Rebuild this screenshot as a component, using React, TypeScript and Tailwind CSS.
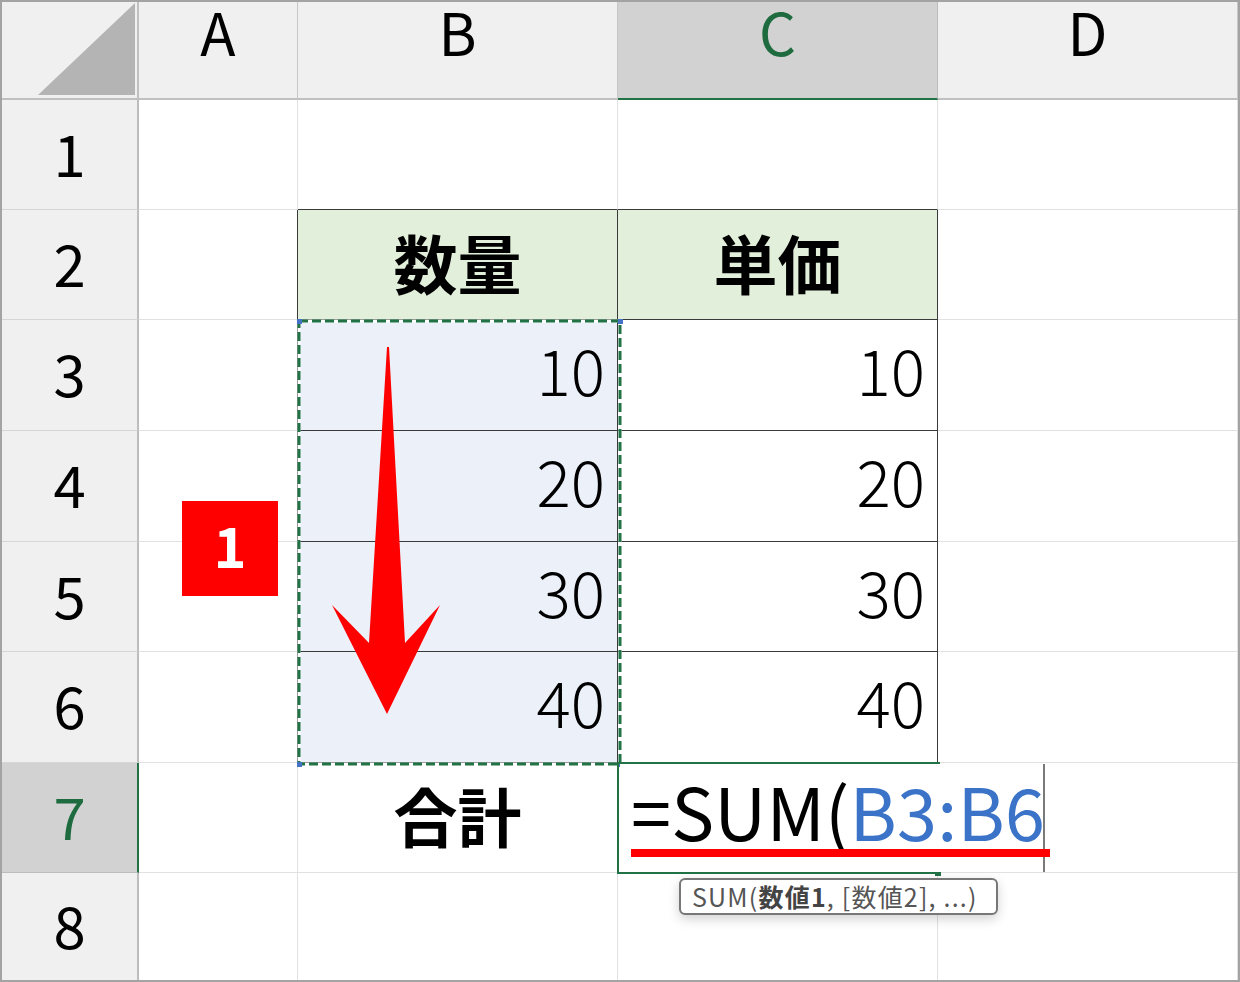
import React from "react";

const FONT = { fontFamily: '"Noto Sans CJK JP", "Noto Sans", sans-serif' };

const colHeaders = ["A", "B", "C", "D"];
const rowHeights = ["h-[110px]", "h-[110px]", "h-[111px]", "h-[111px]", "h-[110px]", "h-[111px]", "h-[110px]", "h-[108px]"];

type CellProps = { row: number; col: string };

function BodyCell({ row, col }: CellProps) {
  const inTable = (col === "B" || col === "C") && row >= 2 && row <= 6;
  const darkRight = inTable || (col === "A" && row >= 2 && row <= 6);
  const darkBottom = inTable || ((col === "B" || col === "C") && row === 1);

  let bg = "bg-white";
  if (inTable && row === 2) bg = "bg-[#e2efda]";
  if (col === "B" && row >= 3 && row <= 6) bg = "bg-[#ebf0f9]";

  const border = `${darkRight ? "border-r-[#3a3a3a]" : "border-r-[#e1e1e1]"} ${darkBottom ? "border-b-[#3a3a3a]" : "border-b-[#e1e1e1]"}`;

  let content: React.ReactNode = null;
  let align = "justify-center pb-[8px]";
  if (row === 2 && col === "B") content = <span className="text-[64px] font-bold">数量</span>;
  if (row === 2 && col === "C") content = <span className="text-[64px] font-bold">単価</span>;
  if (row === 7 && col === "B") content = <span className="text-[64px] font-bold">合計</span>;
  if ((col === "B" || col === "C") && row >= 3 && row <= 6) {
    content = <span className="text-[64px] font-light">{(row - 2) * 10}</span>;
    align = "justify-end pr-[12px] pb-[14px]";
  }

  return (
    <div className={`flex items-center ${align} border-r border-b ${border} ${bg} text-black leading-none`}>
      {content}
    </div>
  );
}

export default function App() {
  return (
    <div className="w-[1240px] h-[982px] border-2 border-[#a3a3a3] bg-white overflow-hidden" style={FONT}>
      <div className="relative w-full h-full">
        <div className="grid grid-cols-[137px_159px_320px_320px_1fr]">
          {/* column headers */}
          <div className="h-[98px] bg-[#f0f0f0] border-r-2 border-b-2 border-[#c0c0c0] relative">
            <svg width="137" height="98" className="absolute inset-0">
              <polygon points="36,93 133,93 133,1" fill="#b4b4b4" />
            </svg>
          </div>
          {colHeaders.map((c) => (
            <div
              key={c}
              className={
                c === "C"
                  ? "h-[98px] bg-[#d2d2d2] border-r border-r-[#bcbcbc] border-b-2 border-b-[#217346] flex justify-center text-[58px] leading-none text-[#1e6b3f]"
                  : "h-[98px] bg-[#f0f0f0] border-r border-r-[#c8c8c8] border-b-2 border-b-[#c0c0c0] flex justify-center text-[58px] leading-none text-black"
              }
            >
              {c}
            </div>
          ))}

          {rowHeights.map((h, i) => {
            const row = i + 1;
            return (
              <React.Fragment key={row}>
                <div
                  className={
                    row === 7
                      ? `${h} bg-[#d2d2d2] border-r-2 border-r-[#217346] border-b border-b-[#bcbcbc] flex items-center justify-center pb-[6px] text-[58px] leading-none text-[#1e6b3f]`
                      : `${h} bg-[#f0f0f0] border-r-2 border-r-[#bdbdbd] border-b border-b-[#d6d6d6] flex items-center justify-center pb-[6px] text-[58px] leading-none text-black`
                  }
                >
                  {row}
                </div>
                {colHeaders.map((c) => (
                  <BodyCell key={c} row={row} col={c} />
                ))}
              </React.Fragment>
            );
          })}
        </div>

        {/* marching ants selection B3:B6 */}
        <svg className="absolute left-[295px] top-[317px]" width="326" height="448">
          <rect x="2" y="2" width="321" height="443" fill="none" stroke="#ffffff" strokeWidth="3" />
          <rect x="2" y="2" width="321" height="443" fill="none" stroke="#217346" strokeWidth="3" strokeDasharray="9 4" />
          <rect x="0" y="0" width="5" height="5" fill="#4472c4" />
          <rect x="321" y="0" width="5" height="5" fill="#4472c4" />
          <rect x="0" y="443" width="5" height="5" fill="#4472c4" />
          <rect x="321" y="443" width="5" height="5" fill="#4472c4" />
        </svg>

        {/* active cell C7 with in-cell editor */}
        <div className="absolute left-[615px] top-[760px] w-[323px] h-[112px] border-2 border-[#217346]" />
        <div className="absolute left-[933px] top-[868px] w-[6px] h-[6px] bg-[#217346]" />
        <div className="absolute left-[618px] top-[762px] w-[425px] h-[108px] bg-white border-r-2 border-r-[#7a7a7a] flex flex-col pl-[11px] pt-[10px]">
          <div className="whitespace-nowrap text-[72px] leading-none tracking-[0.2px] text-black">
            =SUM(<span className="text-[#3a73c8]">B3:B6</span>
          </div>
          <div className="mt-[3px] w-[419px] h-[8px] bg-[#ff0000]" />
        </div>

        {/* tooltip */}
        <div className="absolute left-[677px] top-[876px] w-[319px] h-[37px] rounded-[6px] border-2 border-[#777777] bg-white shadow-[0_4px_12px_rgba(0,0,0,0.18)] flex items-center pl-[11px] text-[25px] leading-none tracking-[1.2px] text-[#555555] whitespace-nowrap">
          SUM(<span className="font-bold text-[#444444]">数値1</span>, [数値2], ...)
        </div>

        {/* badge */}
        <div className="absolute left-[180px] top-[499px] w-[96px] h-[95px] bg-[#ff0000] flex items-center justify-center pb-[10px] text-white text-[56px] font-bold leading-none">
          1
        </div>

        {/* arrow */}
        <svg className="absolute left-[320px] top-[335px]" width="130" height="390">
          <polygon points="65,10 67,10 83,306 118,268 65,377 10,268 47,306" fill="#ff0000" />
        </svg>
      </div>
    </div>
  );
}
